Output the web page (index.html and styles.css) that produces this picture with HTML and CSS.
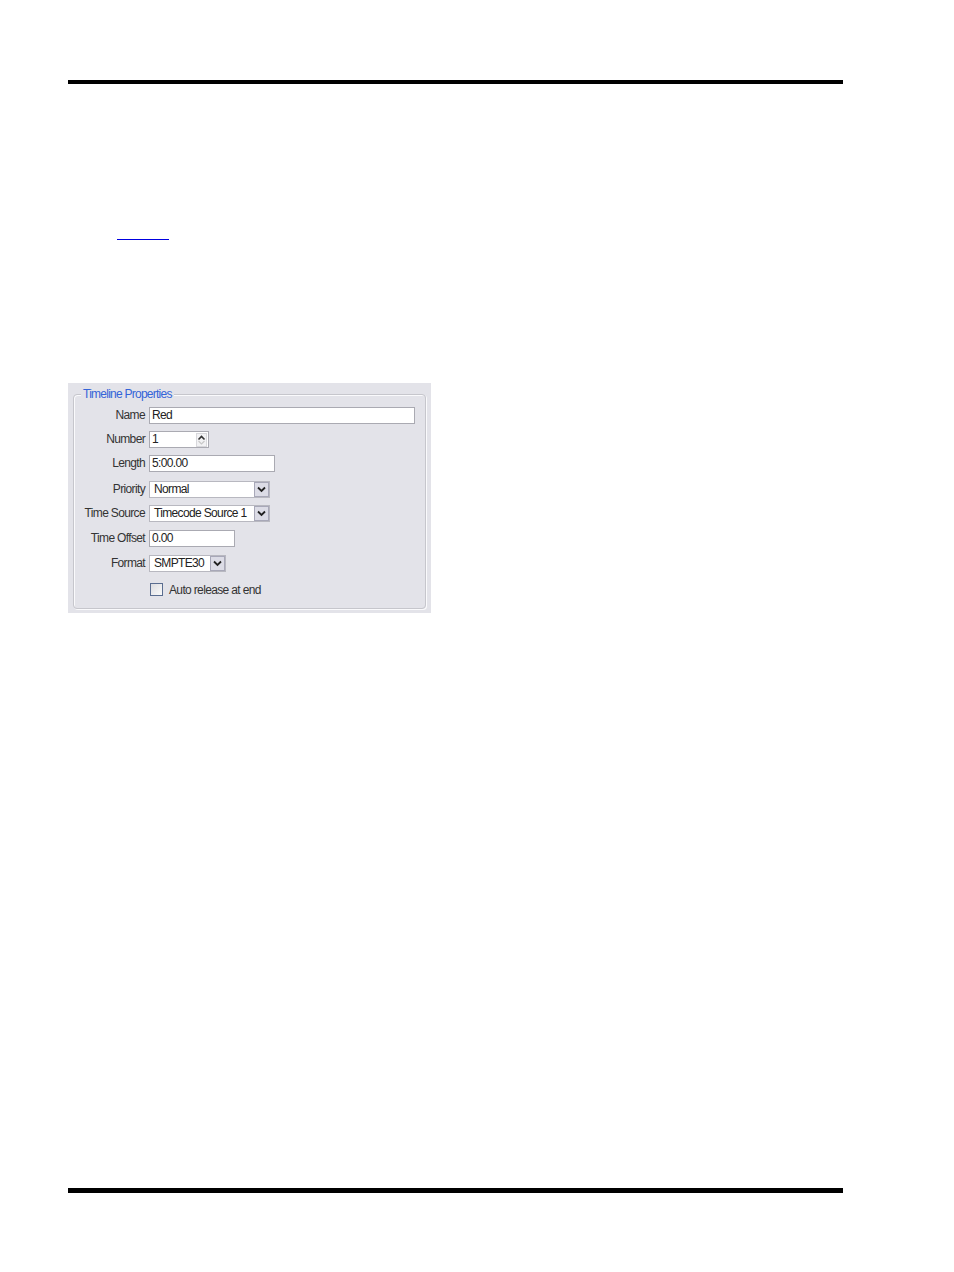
FILE: index.html
```html
<!DOCTYPE html>
<html>
<head>
<meta charset="utf-8">
<link rel="stylesheet" href="styles.css">
</head>
<body>
<div class="page">
  <div class="rule"></div>
  <div class="link-row"><span class="link"></span></div>
  <div class="panel">
    <div class="group">
      <div class="legend">Timeline Properties</div>
      <div class="form">
        <div class="row r-name"><span class="lbl">Name</span><div class="ctl input w-name">Red</div></div>
        <div class="row r-num"><span class="lbl">Number</span>
          <div class="ctl input w-num">1
            <span class="spin">
              <svg width="9" height="12" viewBox="0 0 9 12"><path d="M1.5 5.5 L4.5 2.5 L7.5 5.5" fill="none" stroke="#333" stroke-width="1.6"/><path d="M1.5 7 L4.5 10 L7.5 7" fill="none" stroke="#c8c8c8" stroke-width="1.2"/></svg>
            </span>
          </div>
        </div>
        <div class="row r-len"><span class="lbl">Length</span><div class="ctl input w-len">5:00.00</div></div>
        <div class="row r-pri"><span class="lbl">Priority</span>
          <div class="ctl select w-pri">Normal<span class="drop"><svg width="9" height="7" viewBox="0 0 9 7"><path d="M1 1.5 L4.5 5 L8 1.5" fill="none" stroke="#222" stroke-width="1.8"/></svg></span></div></div>
        <div class="row r-src"><span class="lbl">Time Source</span>
          <div class="ctl select w-src">Timecode Source 1<span class="drop"><svg width="9" height="7" viewBox="0 0 9 7"><path d="M1 1.5 L4.5 5 L8 1.5" fill="none" stroke="#222" stroke-width="1.8"/></svg></span></div></div>
        <div class="row r-off"><span class="lbl">Time Offset</span><div class="ctl input w-off">0.00</div></div>
        <div class="row r-fmt"><span class="lbl">Format</span>
          <div class="ctl select w-fmt">SMPTE30<span class="drop"><svg width="9" height="7" viewBox="0 0 9 7"><path d="M1 1.5 L4.5 5 L8 1.5" fill="none" stroke="#222" stroke-width="1.8"/></svg></span></div></div>
        <div class="row r-chk"><span class="lbl"></span><label class="check"><span class="box"></span>Auto release at end</label></div>
      </div>
    </div>
  </div>
  <div class="rule bottom"></div>
</div>
</body>
</html>
```

FILE: styles.css
```css
html, body {
  margin: 0;
  padding: 0;
  background: #fff;
}
.page {
  padding-top: 80px;
  font-family: "Liberation Sans", Arial, sans-serif;
}
.rule {
  margin-left: 68px;
  width: 775px;
  height: 4px;
  background: #000;
}
.rule.bottom {
  margin-top: 575px;
  height: 5px;
}
.link-row {
  margin-top: 155px;
  height: 1px;
  padding-left: 117px;
}
.link {
  display: block;
  width: 52px;
  height: 1px;
  background: #0000e0;
}
.panel {
  margin-top: 143px;
  margin-left: 68px;
  width: 363px;
  height: 230px;
  background: #e3e3e9;
  box-sizing: border-box;
  padding: 11px 5px 4px 5px;
}
.group {
  position: relative;
  height: 100%;
  box-sizing: border-box;
  border: 1px solid #c6c6cc;
  border-radius: 4px;
  box-shadow: 1px 1px 0 #fafafc inset, 1px 1px 0 #fafafc;
}
.legend {
  position: absolute;
  top: -8px;
  left: 7px;
  padding: 0 2px;
  background: #e3e3e9;
  color: #3464d8;
  font-size: 12px;
  letter-spacing: -0.75px;
  line-height: 14px;
}
.form {
  display: grid;
  grid-template-columns: 71px auto;
  grid-template-rows: 24px 24px 26px 24px 25px 25px 26px 17px;
  padding-top: 12px;
  font-size: 12px;
  letter-spacing: -0.65px;
  color: #333;
}
.row {
  display: contents;
}
.lbl {
  text-align: right;
  line-height: 17px;
  height: 17px;
}
.ctl {
  position: relative;
  margin-left: 4px;
  height: 17px;
  box-sizing: border-box;
  background: #fff;
  border: 1px solid #aaaab2;
  line-height: 15px;
  padding-left: 2px;
  color: #222;
}
.w-name { width: 266px; }
.w-num { width: 60px; }
.w-len { width: 126px; }
.w-pri { width: 121px; }
.w-src { width: 121px; }
.w-off { width: 86px; }
.w-fmt { width: 77px; }
.select {
  padding-left: 4px;
  border-color: #b8b8c0;
}
.drop {
  position: absolute;
  right: 0;
  top: 0;
  width: 15px;
  height: 15px;
  box-sizing: border-box;
  background: #dcdce6;
  border: 1px solid #a8a8b8;
  display: flex;
  align-items: center;
  justify-content: center;
}
.spin {
  position: absolute;
  right: 1px;
  top: 1px;
  width: 11px;
  height: 14px;
  display: flex;
  align-items: center;
  justify-content: center;
  background: #f2f2f4;
  border: 1px solid #d8d8dc;
  box-sizing: border-box;
}
.check {
  display: flex;
  align-items: center;
  margin-left: 5px;
  height: 17px;
  color: #333;
}
.box {
  width: 13px;
  height: 13px;
  box-sizing: border-box;
  border: 1px solid #5a6d90;
  background: linear-gradient(135deg, #dcdce0, #fafafa);
  margin-right: 6px;
}
```
